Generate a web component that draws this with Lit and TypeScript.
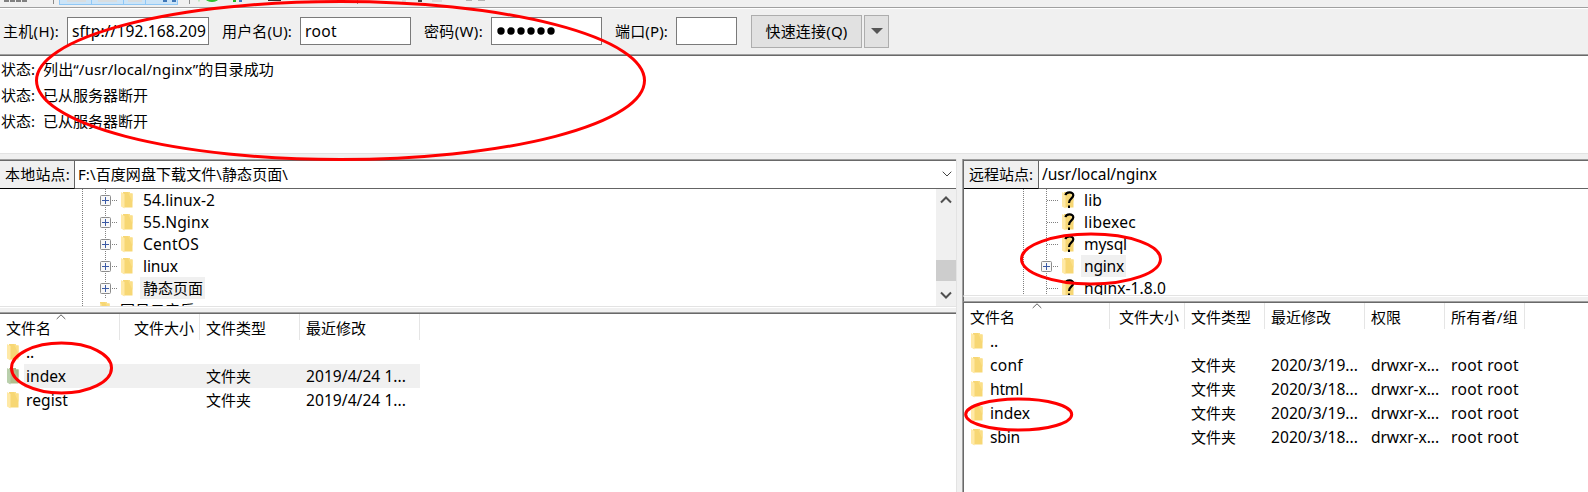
import { LitElement, html, svg, css, nothing } from "lit";
import { customElement, property } from "lit/decorators.js";

/** Single-line label whose tracking is computed so that it fills `w` pixels. */
@customElement("fit-label")
class FitLabel extends LitElement {
  @property() text = "";
  @property({ type: Number }) w = 0;
  static styles = css`
    :host { display: inline-block; white-space: pre; flex: none; }
  `;
  render() {
    return html`<span>${this.text}</span>`;
  }
  updated() {
    const span = this.renderRoot.querySelector("span")!;
    span.style.letterSpacing = "0px";
    const natural = span.getBoundingClientRect().width;
    if (this.w) span.style.letterSpacing = `${(this.w - natural) / this.text.length}px`;
  }
}

const t = (text: string, w: number, cls = "") =>
  html`<fit-label class=${cls} .text=${text} .w=${w}></fit-label>`;

const folder = (kind = "") => html`
  <svg class="folder" width="14" height="18" viewBox="0 0 14 18">
    <path d="M3 1H10V2.5H12.5V16.500H3Z" fill=${kind === "sel" ? "#b1bd8c" : "#f7d774"} />
    <path d="M8 1H10V2.5H12.5V11Z" fill=${kind === "sel" ? "#a3b68a" : "#fbdf88"} />
    <path d="M1 1L4.500 3V17.5L1 15.5Z" fill=${kind === "sel" ? "#b9cfac" : "#ffe9a6"} />
    ${kind === "q"
      ? svg`<path d="M4.5 4.2C5 .8 12.3 .2 12.3 4.3C12.3 7.5 8 7.3 8 12" fill="none" stroke="#000" stroke-width="2.2"/><rect x="7" y="14.5" width="2" height="2.5" fill="#000"/>`
      : nothing}
  </svg>`;

const plus = html`
  <svg class="plus" width="11" height="11" viewBox="0 0 11 11">
    <rect x=".5" y=".5" width="10" height="10" rx="1" fill="#f8f8f8" stroke="#8c8c8c" />
    <path d="M2 5.5H9M5.5 2V9" stroke="#3b5aa5" />
  </svg>`;

const caret = html`
  <svg class="caret" width="10" height="6" viewBox="0 0 10 6">
    <path d="M.7 5L5 .8L9.3 5" fill="none" stroke="#606060" />
  </svg>`;

interface Col { label: string; w: number; tw: number; right?: boolean }
interface Row { name: string; nw: number; cells: [string, number][]; selected?: boolean }

@customElement("app-root")
class AppRoot extends LitElement {
  static styles = css`
    * { box-sizing: border-box; }
    :host {
      display: flex; flex-direction: column; position: relative;
      width: 1588px; height: 492px; overflow: hidden; background: #f0f0f0; color: #000;
      font: 15px/22px "Noto Sans", "Noto Sans CJK SC", sans-serif;
    }
    svg { display: block; flex: none; }
    .la { font-size: 15.6px; }
    .tools { height: 9px; flex: none; }
    .quick {
      height: 45px; flex: none; display: flex; align-items: center; padding: 0 0 1px 3px;
    }
    .field {
      height: 28px; background: #fff; border: 1px solid #7a7a7a; display: flex;
      align-items: center; padding: 0 0 1px 4px; overflow: hidden; flex: none;
    }
    .btn {
      height: 33px; background: #e1e1e1; border: 1px solid #adadad; flex: none;
      display: flex; align-items: center; justify-content: center;
    }
    .sunk { border-top: 1px solid #a0a0a0; background: #fff; box-shadow: inset 0 1px #696969; }
    .log {
      height: 100px; flex: none; padding: 2px 0 0 1px; border-bottom: 1px solid #e3e3e3;
    }
    .line { display: flex; height: 26px; align-items: center; padding-bottom: 2px; }
    .line fit-label:first-child { width: 42px; }
    .panes { flex: 1; display: flex; gap: 5px; padding-top: 5px; min-height: 0; }
    .pane { display: flex; flex-direction: column; }
    .pane.local { width: 957px; border-right: 1px solid #e3e3e3; }
    .pane.remote { flex: 1; border-left: 1px solid #a0a0a0; }
    .remote > * { border-left: 1px solid #696969; }
    .addr { display: flex; height: 30px; flex: none; padding-top: 1px; }
    .addr .lab {
      background: #f0f0f0; height: 28px; display: flex; align-items: center;
      border-right: 1px solid #646464; border-bottom: 1px solid #000; flex: none;
      padding-bottom: 1px;
    }
    .addr .val {
      flex: 1; height: 28px; display: flex; align-items: center; justify-content: space-between;
      border-bottom: 1px solid #646464; padding: 0 4px 1px 3px;
    }
    .tree { display: flex; flex: none; border-bottom: 1px solid #e3e3e3; overflow: hidden; background: #fff; }
    .local .tree { height: 118px; }
    .remote .tree { height: 107px; }
    .guide { width: 1px; flex: none; background: repeating-linear-gradient(#808080 0 1px, transparent 1px 2px); }
    .nodes { flex: 1; overflow: hidden; }
    .node { display: flex; height: 22px; align-items: center; }
    .trunk { width: 11px; height: 22px; flex: none; display: flex; align-items: center;
      background: repeating-linear-gradient(#808080 0 1px, transparent 1px 2px) 5px 0 / 1px 100% no-repeat; }
    .stub { height: 1px; flex: none; background: repeating-linear-gradient(90deg, transparent 0 1px, #808080 1px 2px); }
    .local .stub { width: 6px; margin-right: 3px; }
    .remote .stub { width: 7px; margin-right: 2px; }
    .remote .stub.long { width: 13px; margin-left: -6px; }
    .name { height: 22px; margin-left: 6px; padding: 0 2px 0 3px; display: flex; align-items: center; }
    .name.sel { background: #f0f0f0; }
    .bar {
      width: 20px; flex: none; background: #f0f0f0; display: flex; flex-direction: column;
      align-items: center; padding: 7px 0 7px;
    }
    .thumb { width: 20px; height: 21px; background: #cdcdcd; margin: 56px 0 10px; }
    .gap { height: 5px; flex: none; background: #f0f0f0; border-top: 1px solid #fff; }
    .list { flex: 1; position: relative; }
    .head { display: flex; height: 27px; }
    .th {
      flex: none; display: flex; align-items: center; padding: 0 6px 0; position: relative;
      margin-top: 1px; border-right: 1px solid #e5e5e5;
    }
    .th fit-label { margin-top: 1px; }
    .th.right { justify-content: flex-end; padding-right: 5px; }
    .th .caret { position: absolute; left: calc(50% - 4px); top: 0; }
    .remote .th .caret { left: calc(50% - 5px); }
    .row { display: flex; height: 24px; align-items: center; }
    .cell { flex: none; padding-left: 6px; height: 24px; display: flex; align-items: center; }
    .fname { flex: 1; height: 24px; margin-left: 4px; padding-left: 2px; display: flex; align-items: center; }
    .row.sel .fname, .row.sel .cell:not(.first) { background: #f0f0f0; }
    .marks { position: absolute; left: 0; top: 0; }
  `;

  private table(cols: Col[], rows: Row[]) {
    return html`
      <div class="list sunk">
        <div class="head">
          ${cols.map((c, i) => html`
            <div class="th ${c.right ? "right" : ""}" style="width:${c.w}px">
              ${t(c.label, c.tw)}${i === 0 ? caret : nothing}
            </div>`)}
        </div>
        ${rows.map((r) => html`
          <div class="row ${r.selected ? "sel" : ""}">
            <div class="cell first" style="width:${cols[0].w}px">
              ${folder(r.selected ? "sel" : "")}
              <div class="fname">${t(r.name, r.nw, "la")}</div>
            </div>
            ${cols.slice(1).map((c, i) => html`
              <div class="cell" style="width:${c.w}px">
                ${r.cells[i] ? t(r.cells[i][0], r.cells[i][1], i > 1 ? "la" : "") : nothing}
              </div>`)}
          </div>`)}
      </div>`;
  }

  private node(name: string, w: number, opts: { plus?: boolean; kind?: string; sel?: boolean } = {}) {
    return html`
      <div class="node">
        <div class="trunk">${opts.plus ? plus : nothing}</div>
        <div class="stub ${opts.plus ? "" : "long"}"></div>
        ${folder(opts.kind)}
        <div class="name ${opts.sel ? "sel" : ""}">${t(name, w, /[a-z]/.test(name) ? "la" : "")}</div>
      </div>`;
  }

  render() {
    const dir = (name: string, nw: number, day: string): Row => ({
      name, nw,
      cells: [["", 0], ["文件夹", 45], [`2020/3/${day}...`, 87], ["drwxr-x...", 68], ["root root", 68]],
    });
    return html`
      <svg class="tools" width="1588" height="9" viewBox="0 0 1588 9">
        <path d="M4 1H28" stroke="#808080" stroke-width="2" stroke-dasharray="5 1" />
        <path d="M53.5 0V4M189.5 0V4M357.5 0V4" stroke="#8c8c8c" />
        <rect x="59.500" y="-2" width="118" height="6.500" fill="#cce4f7" stroke="#90c8f6" />
        <path d="M91.500 0V4M123.500 0V4M145.500 0V4" stroke="#90c8f6" />
        <path d="M67 1H86M98 1H117M128 1H142" stroke="#d8dde0" stroke-width="2" />
        <path d="M163 1H167M172 1H176" stroke="#3f77b8" stroke-width="2" />
        <path d="M205 -1Q212 4 219 -1Z" fill="#2fc02f" stroke="#2fc02f" />
        <path d="M199 0V1.500" stroke="#8fdf8f" />
        <rect x="233" y="0" width="3" height="2" fill="#23b823" />
        <rect x="239" y="0" width="3" height="2" fill="#3d79c8" />
        <path d="M268 .5H281" stroke="#303030" />
        <path d="M310 1H317M325 1H334M402 1H406M432 1H442" stroke="#dddddd" stroke-width="2" />
        <path d="M418 1H422" stroke="#404040" stroke-width="2" />
        <path d="M466 .5H472M478 .5H485" stroke="#b5b5b5" />
        <path d="M0 7.500H1588" stroke="#a0a0a0" />
        <path d="M0 8.500H1588" stroke="#fff" />
      </svg>
      <div class="quick">
        ${t("主机(H):", 56)}
        <div class="field" style="width:142px;margin:0 13px 0 8px">${t("sftp://192.168.209", 134, "la")}</div>
        ${t("用户名(U):", 70)}
        <div class="field" style="width:111px;margin:0 13px 0 8px">${t("root", 32, "la")}</div>
        ${t("密码(W):", 59)}
        <div class="field" style="width:111px;margin:0 13px 0 8px">
          <svg width="62" height="9" viewBox="0 0 62 9">
            ${[0, 1, 2, 3, 4, 5].map((i) => svg`<circle cx=${5 + i * 10} cy="5" r="3.700"/>`)}
          </svg>
        </div>
        ${t("端口(P):", 53)}
        <div class="field" style="width:61px;margin:0 14px 0 8px"></div>
        <div class="btn" style="width:111px;margin-right:2px">${t("快速连接(Q)", 82)}</div>
        <div class="btn" style="width:25px">
          <svg width="12" height="6" viewBox="0 0 12 6"><path d="M0 0H12L6 6Z" fill="#555" /></svg>
        </div>
      </div>
      <div class="log sunk">
        <div class="line">${t("状态:", 34)}${t("列出“/usr/local/nginx”的目录成功", 231)}</div>
        <div class="line">${t("状态:", 34)}${t("已从服务器断开", 105)}</div>
        <div class="line">${t("状态:", 34)}${t("已从服务器断开", 105)}</div>
      </div>
      <div class="panes">
        <div class="pane local">
          <div class="addr sunk">
            <div class="lab" style="width:75px;padding-left:5px">${t("本地站点:", 65)}</div>
            <div class="val">
              ${t("F:\\百度网盘下载文件\\静态页面\\", 210)}
              <svg width="10" height="6" viewBox="0 0 10 6"><path d="M.7 .7L5 5L9.300 .7" fill="none" stroke="#444" /></svg>
            </div>
          </div>
          <div class="tree">
            <div class="guide" style="margin:0 17px 0 82px"></div>
            <div class="nodes">
              ${this.node("54.linux-2", 72, { plus: true })}
              ${this.node("55.Nginx", 66, { plus: true })}
              ${this.node("CentOS", 56, { plus: true })}
              ${this.node("linux", 35, { plus: true })}
              ${this.node("静态页面", 60, { plus: true, sel: true })}
              <div class="node" style="margin-left:-3px">${folder()}<div class="name">${t("网易云音乐", 75)}</div></div>
            </div>
            <div class="bar">
              <svg width="12" height="8" viewBox="0 0 12 8"><path d="M1 6.500L6 1.500L11 6.500" fill="none" stroke="#505050" stroke-width="2" /></svg>
              <div class="thumb"></div>
              <svg width="12" height="8" viewBox="0 0 12 8"><path d="M1 1.500L6 6.500L11 1.500" fill="none" stroke="#505050" stroke-width="2" /></svg>
            </div>
          </div>
          <div class="gap"></div>
          ${this.table(
            [
              { label: "文件名", w: 120, tw: 45 },
              { label: "文件大小", w: 80, tw: 60, right: true },
              { label: "文件类型", w: 100, tw: 60 },
              { label: "最近修改", w: 120, tw: 60 },
            ],
            [
              { name: "..", nw: 8, cells: [] },
              { name: "index", nw: 40, cells: [["", 0], ["文件夹", 45], ["2019/4/24 1...", 100]], selected: true },
              { name: "regist", nw: 42, cells: [["", 0], ["文件夹", 45], ["2019/4/24 1...", 100]] },
            ],
          )}
        </div>
        <div class="pane remote">
          <div class="addr sunk">
            <div class="lab" style="width:75px;padding-left:5px">${t("远程站点:", 64)}</div>
            <div class="val">${t("/usr/local/nginx", 115, "la")}</div>
          </div>
          <div class="tree">
            <div class="guide" style="margin:0 17px 0 59px"></div>
            <div class="nodes">
              ${this.node("lib", 18, { kind: "q" })}
              ${this.node("libexec", 52, { kind: "q" })}
              ${this.node("mysql", 43, { kind: "q" })}
              ${this.node("nginx", 40, { plus: true, sel: true })}
              ${this.node("nginx-1.8.0", 82, { kind: "q" })}
            </div>
          </div>
          <div class="gap"></div>
          ${this.table(
            [
              { label: "文件名", w: 146, tw: 45 },
              { label: "文件大小", w: 75, tw: 60, right: true },
              { label: "文件类型", w: 80, tw: 60 },
              { label: "最近修改", w: 100, tw: 60 },
              { label: "权限", w: 80, tw: 30 },
              { label: "所有者/组", w: 80, tw: 67 },
            ],
            [
              { name: "..", nw: 8, cells: [] },
              dir("conf", 33, "19"),
              dir("html", 33, "18"),
              dir("index", 40, "19"),
              dir("sbin", 30, "18"),
            ],
          )}
        </div>
      </div>
      <svg class="marks" width="1588" height="492" viewBox="0 0 1588 492" fill="none" stroke="#f00" stroke-width="3">
        <ellipse cx="340.500" cy="80.500" rx="304" ry="79" />
        <ellipse cx="61.500" cy="368" rx="50" ry="25" />
        <ellipse cx="1091" cy="259" rx="69.500" ry="25" />
        <ellipse cx="1018.700" cy="414.500" rx="53" ry="15.500" />
      </svg>
    `;
  }
}
